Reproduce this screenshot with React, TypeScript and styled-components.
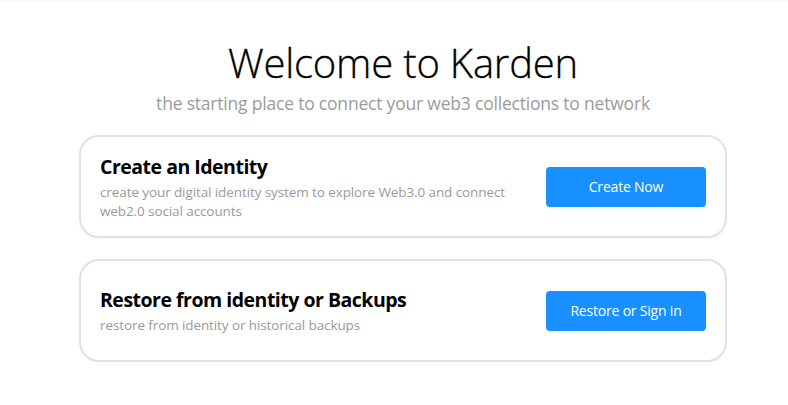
import React from "react";
import styled, { createGlobalStyle } from "styled-components";

const GlobalStyle = createGlobalStyle`
    html, body {
        margin: 0;
        padding: 0;
        background: #ffffff;
        font-family: "Open Sans", "Noto Sans", sans-serif;
    }
`;

type Action = {
    title: string;
    description: string;
    button: string;
};

const ACTIONS: Action[] = [
    {
        title: "Create an Identity",
        description: "create your digital identity system to explore Web3.0 and connect web2.0 social accounts",
        button: "Create Now",
    },
    {
        title: "Restore from identity or Backups",
        description: "restore from identity or historical backups",
        button: "Restore or Sign in",
    },
];

export default function App() {
    return (
        <>
            <GlobalStyle />
            <TopEdge />
            <Page>
                <Title>Welcome to Karden</Title>
                <Subtitle>the starting place to connect your web3 collections to network</Subtitle>
                <CardList>
                    {ACTIONS.map((action) => (
                        <Card key={action.title}>
                            <CardText>
                                <CardTitle>{action.title}</CardTitle>
                                <CardDescription>{action.description}</CardDescription>
                            </CardText>
                            <PrimaryButton>{action.button}</PrimaryButton>
                        </Card>
                    ))}
                </CardList>
            </Page>
        </>
    );
}

const TopEdge = styled.div`
    height: 1px;
    background: #f7f7f7;
    box-shadow: 0 1px 3px rgba(0, 0, 0, 0.05);
`;

const Page = styled.main`
    display: flex;
    flex-direction: column;
    align-items: center;
    padding: 36px 61px 0 79px;
`;

const Title = styled.h1`
    margin: 0;
    font-size: 40px;
    font-weight: 300;
    line-height: 52px;
    letter-spacing: -0.2px;
    color: #000;
    -webkit-text-stroke: 0.3px #000;
`;

const Subtitle = styled.p`
    margin: 2px 0 0;
    font-size: 17.5px;
    line-height: 24px;
    letter-spacing: -0.2px;
    color: #9b9b9b;
`;

const CardList = styled.div`
    display: flex;
    flex-direction: column;
    gap: 21px;
    width: 100%;
    margin-top: 20px;
`;

const Card = styled.section`
    display: flex;
    flex-direction: row;
    align-items: center;
    justify-content: space-between;
    gap: 24px;
    box-sizing: border-box;
    height: 103px;
    padding: 0 19px;
    border: 2px solid #e2e2e2;
    border-radius: 20px;
    background: #fff;
    box-shadow: 0 1px 3px rgba(0, 0, 0, 0.04);
`;

const CardText = styled.div`
    display: flex;
    flex-direction: column;
    max-width: 420px;
`;

const CardTitle = styled.h2`
    margin: 0;
    font-size: 19.5px;
    font-weight: 700;
    line-height: 28px;
    letter-spacing: -0.5px;
    color: #000;
`;

const CardDescription = styled.p`
    margin: 2px 0 0;
    font-size: 13.5px;
    line-height: 19px;
    letter-spacing: -0.1px;
    color: #9a9a9a;
`;

const PrimaryButton = styled.button`
    flex: none;
    width: 160px;
    height: 40px;
    border: none;
    border-radius: 4px;
    background: #1890ff;
    color: #fff;
    font-family: inherit;
    font-size: 14px;
    letter-spacing: -0.2px;
    cursor: pointer;
`;
